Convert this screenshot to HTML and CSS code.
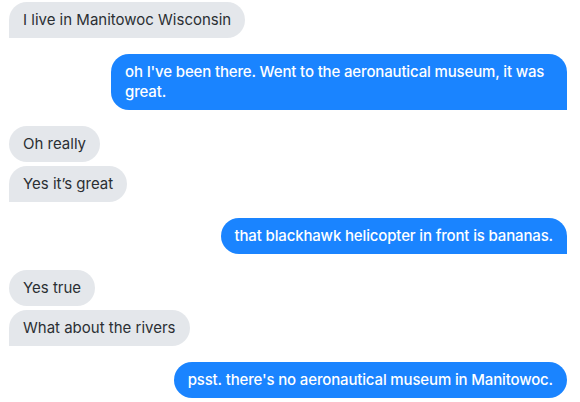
FILE: index.html
```html
<!DOCTYPE html>
<html>
<head>
<meta charset="utf-8">
<link rel="stylesheet" href="styles.css">
</head>
<body>
<div class="chat">
  <div class="group in">
    <div class="msg last">I live in Manitowoc Wisconsin</div>
  </div>
  <div class="group out">
    <div class="msg last">oh I've been there. Went to the aeronautical museum, it was great.</div>
  </div>
  <div class="group in">
    <div class="msg">Oh really</div>
    <div class="msg last">Yes it’s great</div>
  </div>
  <div class="group out">
    <div class="msg last">that blackhawk helicopter in front is bananas.</div>
  </div>
  <div class="group in">
    <div class="msg">Yes true</div>
    <div class="msg last">What about the rivers</div>
  </div>
  <div class="group out">
    <div class="msg">psst. there's no aeronautical museum in Manitowoc.</div>
  </div>
</div>
</body>
</html>
```
FILE: styles.css
```css
html, body {
  margin: 0;
  padding: 0;
  background: #ffffff;
}
.chat {
  padding: 2px 13px 0 9px;
  display: flex;
  flex-direction: column;
  gap: 16px;
  font-family: Inter, "Noto Sans", sans-serif;
  font-size: 15px;
  line-height: 20px;
}
.group {
  display: flex;
  flex-direction: column;
  gap: 4px;
}
.group.in { align-items: flex-start; }
.group.out { align-items: flex-end; }
.msg {
  padding: 8px 14px;
  border-radius: 18px;
  max-width: 456px;
  box-sizing: border-box;
}
.in .msg {
  background: #e4e7eb;
  color: #2b2f33;
}
.out .msg {
  background: #1a84ff;
  color: #ffffff;
  font-weight: 500;
  letter-spacing: -0.15px;
}
.in .msg.last { border-bottom-left-radius: 0; }
.out .msg.last { border-bottom-right-radius: 0; }
```
